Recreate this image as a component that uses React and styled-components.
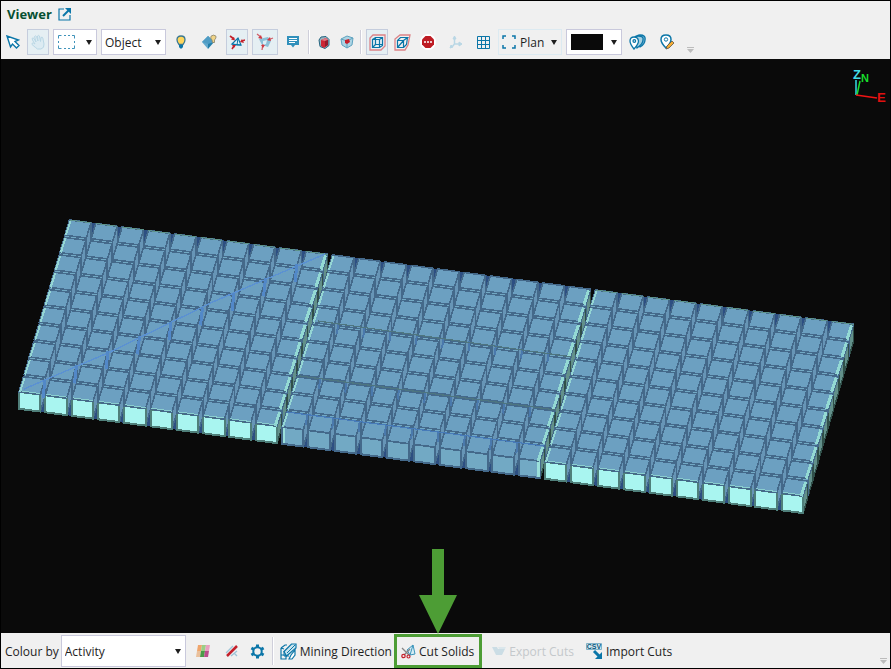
import styled, { createGlobalStyle } from "styled-components";

const GlobalStyle = createGlobalStyle`
  * {
    box-sizing: border-box;
  }
  body {
    margin: 0;
    background: #0a0a0a;
    font-family: "Open Sans", "Noto Sans", sans-serif;
    font-size: 12px;
    color: #1e1e1e;
  }
  button, select {
    font: inherit;
    color: inherit;
  }
`;

const blue = "#0b76a8";
const red = "#c4202b";
const pale = "#b9d7e5";

const CursorIcon = () => (
  <svg width="14" height="14" viewBox="0 0 14 14" fill="#fff" stroke={blue} strokeWidth="1.4">
    <path d="M1 1l3.500 11 2-3 4 4 2.500-2.500-4-4 3.500-1.500z" />
  </svg>
);

const HandIcon = () => (
  <svg width="16" height="16" viewBox="0 0 16 16" fill="#dcebf2" stroke={pale} strokeWidth="1">
    <path d="M3 7L2 4.500q1-1.200 2 0L6 8 4.500 2.500q1-1.300 2 0L8 7l-.5-5q1-1.200 2 0l1 5.500 .5-4q1.300-1 1.800.5l1.200 6q.5 4-3 5H7.500Q6 14 2 10.500q-.5-2 1.500-1.500L5 10z" />
  </svg>
);

const MarqueeIcon = () => (
  <svg width="17" height="14" viewBox="0 0 17 14" fill="none" stroke="#3f93ba">
    <path d="M.5 3.500v-3h3M6 .5h2M10 .5h2M14 .5h2.500v3M16.500 6v2M16.500 10.500v3H14M12 13.500h-2M8 13.500H6M3.500 13.500h-3v-3M.5 8V6" />
  </svg>
);

const BulbIcon = () => (
  <svg width="10" height="14" viewBox="0 0 10 14">
    <path d="M3 9.500Q1 7 1 4.700 1 1 5 1t4 3.700Q9 7 7 9.500z" fill="#ffd65c" stroke="#3b7892" strokeWidth="1.300" />
    <path d="M3 10h4v2L5.800 13.500H4.200L3 12z" fill={blue} />
  </svg>
);

const DiamondBulbIcon = () => (
  <svg width="16" height="16" viewBox="0 0 16 16">
    <path d="M1 8l6-6v13z" fill="#62a9ce" />
    <path d="M7 2l6 6-6 7z" fill="#237ea9" />
    <path d="M1 8l6-6 6 6-6 2z" fill="#4f9cc4" />
    <path d="M11 6Q9 4 10 2.200 12.500 0 15 2.200 15.500 4 13.500 6v2.500h-2z" fill="#f0d487" stroke="#89816a" strokeWidth=".8" />
  </svg>
);

const SnapIcon = () => (
  <svg width="16" height="16" viewBox="0 0 16 16">
    <path d="M3 10l6-6 3 7z" fill="#e4f4f8" stroke={blue} strokeWidth="1.200" />
    <path d="M3 10l5 1 4 0M9 4l-1 7" fill="none" stroke={blue} />
    <path d="M1 2l4 3M16 6l-3 1M3 15l2-3" stroke={red} strokeWidth="1.600" />
    <path d="M5 3l1 3.500-4-1zM13 5l-2 3 4 1zM3 11l4 0-2 3z" fill={red} />
  </svg>
);

const SolidSnapIcon = () => (
  <svg width="18" height="18" viewBox="0 0 18 18">
    <path d="M3 6l9-2 3 4-3 6-6-2z" fill="#8bc0d8" />
    <path d="M7 8l4-1-1 4-3 1z" fill="#dceff6" />
    <path d="M1 1l5 4M17 5l-5 2M6 17l1-6" stroke="#d0606a" strokeWidth="1.300" />
    <path d="M5 2l1 4-4-1zM14 4l-3 3 4 1zM5 12l4 0-2 3z" fill="#cf3a44" />
  </svg>
);

const CommentIcon = () => (
  <svg width="12" height="12" viewBox="0 0 12 12">
    <path d="M0 0h12v9H8l-2 2.500L4 9H0z" fill="#3190bb" />
    <path d="M2 2.500h8M2 4.500h8M2 6.500h6" stroke="#fff" />
  </svg>
);

const RedCubeIcon = () => (
  <svg width="12" height="13" viewBox="0 0 12 13">
    <path d="M3 1l5-.5 3 3v6l-4 3-5-2L1 4z" fill="#9db4c0" stroke="#246580" />
    <path d="M3 4l5-2 2 2v5l-4 3-3-2z" fill="#cb2635" />
    <path d="M3 4l5-2 2 2-3 1z" fill="#e27a84" />
    <path d="M7 5v6l3-2V4z" fill="#951b2c" />
  </svg>
);

const InnerCubeIcon = () => (
  <svg width="14" height="14" viewBox="0 0 14 14">
    <path d="M1 4l6-3 6 2-1 7-5 3-5-3z" fill="#acd4e4" stroke="#5fa3bf" />
    <path d="M1 4l6 2 6-3M7 6v7" stroke="#5fa3bf" fill="none" />
    <path d="M5 5l4-1 1 3-3 2-2-1z" fill={red} />
  </svg>
);

const WireCubeIcon = ({ skewed }) => (
  <svg width="17" height="17" viewBox="0 0 17 17" fill="none">
    <path
      d={skewed ? "M1 16V5l5-4h10l-2 10-3 5z" : "M1 16V4l3-3h12v11l-4 4z"}
      stroke="#dc8387"
      strokeWidth="1.300"
    />
    <path
      d={skewed ? "M3.500 6.500h6v7h-6zM3.500 6.500l3-3h7l-4 3M9.500 13.500l3-3 1-7M3.500 13.500l6-7" : "M3.500 5.500h7v8h-7zM3.500 5.500l3-2h7v8l-3 2M10.500 5.500l3-2M6.500 3.500v7h7M3.500 13.500l3-3"}
      stroke={blue}
      strokeWidth="1.200"
    />
  </svg>
);

const StopIcon = () => (
  <svg width="16" height="16" viewBox="0 0 16 16">
    <circle cx="8" cy="8" r="8" fill="#fff" />
    <path d="M5.500 2h5L14 5.500v5L10.500 14h-5L2 10.500v-5z" fill="#be1c24" />
    <path d="M4 8h2M7 8h2M10 8h2" stroke="#fff" strokeWidth="1.500" />
  </svg>
);

const AxisIcon = () => (
  <svg width="14" height="15" viewBox="0 0 14 15" fill={pale} stroke={pale}>
    <path d="M5.500 3v6H11M5.500 9L3 12" fill="none" strokeWidth="1.500" />
    <path d="M5.500 1L7 4H4zM13 9l-3-2v4zM1 13l1-3 2 2z" />
  </svg>
);

const GridIcon = () => (
  <svg width="13" height="13" viewBox="0 0 13 13" fill="none" stroke={blue}>
    <path d="M.5 .5h12v12H.5zM4.500 .5v12M8.500 .5v12M.5 4.500h12M.5 8.500h12" />
  </svg>
);

const PlanIcon = () => (
  <svg width="14" height="14" viewBox="0 0 14 14" fill="none" stroke={blue} strokeWidth="1.500">
    <path d="M1 4V1h3M10 1h3v3M13 10v3h-3M4 13H1v-3" />
  </svg>
);

const PinsIcon = () => (
  <svg width="17" height="16" viewBox="0 0 17 16" stroke={blue} strokeWidth="1.300">
    <path d="M8 10Q5 1 11 1t5 5q0 4-5 7z" fill="#7ab8d5" />
    <path d="M7 10Q3 2 9 2t5 4q0 4-6 8z" fill="#a5d0e2" />
    <path d="M5 15Q1 10 1 7 1 3 5 3t4.500 4Q9.500 10 5 15z" fill="#fff" />
    <circle cx="5.300" cy="7" r="1.300" fill="#fff" />
  </svg>
);

const PinEditIcon = () => (
  <svg width="14" height="16" viewBox="0 0 14 16">
    <path d="M6 14Q1 9 1 5.500 1 1 6 1t5 4.500Q11 9 6 14z" fill="#fff" stroke={blue} strokeWidth="1.500" />
    <circle cx="6" cy="5.500" r="1.700" fill="#fff" stroke={blue} />
    <path d="M6 15l1-3 5-5 2 2-5 5z" fill="#f5ad35" stroke="#5c5547" strokeWidth=".8" />
  </svg>
);

const OverflowIcon = () => (
  <svg width="7" height="6" viewBox="0 0 7 6">
    <path d="M0 0h7v1H0zM0 2h7L3.500 6z" fill="#bcbcbc" />
  </svg>
);

const PopOutIcon = () => (
  <svg width="13" height="13" viewBox="0 0 13 13" fill="none" stroke={blue} strokeWidth="1.200">
    <path d="M6 1H1v11h11V7" />
    <path d="M5 8l6-6" strokeWidth="2" />
    <path d="M7 0h6v6z" fill={blue} stroke="none" />
  </svg>
);

const PaletteIcon = () => (
  <svg width="14" height="12" viewBox="0 0 14 12">
    <path d="M2 0h4L5 6H1z" fill="#efa56c" />
    <path d="M6 0h4L9 6H5z" fill="#9ace86" />
    <path d="M10 0h4l-1 6H9z" fill="#e9a0c0" />
    <path d="M1 6h4l-1 6H0z" fill="#eac09b" />
    <path d="M5 6h4l-1 6H4z" fill="#4b9d49" />
    <path d="M9 6h4l-1 6H8z" fill="#bc4d8d" />
  </svg>
);

const NoLineIcon = () => (
  <svg width="14" height="14" viewBox="0 0 14 14" fill="none">
    <path d="M1 9l7-7M2 12l9-8M6 12l6-5M9 9l3 3" stroke="#9cc3d7" strokeWidth="1.300" />
    <path d="M2 12L12 2" stroke={red} strokeWidth="2.500" />
  </svg>
);

const GearIcon = () => (
  <svg width="15" height="15" viewBox="0 0 15 15" fill="none" stroke={blue}>
    <circle cx="7.500" cy="7.500" r="4.200" strokeWidth="2" />
    <path d="M7.500 .5v2.500M7.500 12v2.500M1.400 4l2.200 1.200M11.400 9.800l2.200 1.200M1.400 11l2.200-1.200M11.400 5.200L13.600 4" strokeWidth="3" />
  </svg>
);

const MiningIcon = () => (
  <svg width="17" height="17" viewBox="0 0 17 17" fill="none" stroke={blue}>
    <path d="M1 5v11h5v-4H1zM1 5l4-3h2M1 5l3 1" strokeWidth="1.200" />
    <path d="M4 8.500L11.500 1H16v4L6.500 13z" fill="#c9e4ee" strokeWidth="1.200" />
    <path d="M4 8v5h5M7 10l8-8" />
    <path d="M9 16l2-4 4-5v5l-3 4z" fill="#fff" strokeWidth="1.200" />
  </svg>
);

const CutIcon = () => (
  <svg width="15" height="15" viewBox="0 0 15 15" fill="none">
    <path d="M6 6l6-5 2 9-5 1z" fill="#d7edf5" stroke="#3b95bb" />
    <path d="M12 1l-3 10" stroke="#3b95bb" />
    <path d="M1 4l7 7M9 5l-6 6" stroke="#858585" strokeWidth="1.300" />
    <circle cx="2.500" cy="12" r="1.700" stroke={red} strokeWidth="1.200" />
    <circle cx="7.500" cy="12.500" r="1.500" stroke={red} strokeWidth="1.200" />
  </svg>
);

const ExportIcon = () => (
  <svg width="14" height="10" viewBox="0 0 14 10">
    <path d="M0 1h5l1 2h7l-3 6H4z" fill="#cbdde5" />
    <path d="M6 1h8l-1 2H7z" fill="#dbe7ec" />
  </svg>
);

const CsvIcon = () => (
  <svg width="17" height="17" viewBox="0 0 17 17">
    <path d="M.5 .5h15v6H.5z" fill="#d7e8ef" stroke="#80b2c8" />
    <text x="8" y="6" textAnchor="middle" fontSize="7" fontWeight="700" fontFamily="Liberation Sans, sans-serif" fill="#07587e">
      CSV
    </text>
    <path d="M8 8l6 6" stroke={blue} strokeWidth="3" />
    <path d="M16 9v7H9z" fill={blue} />
  </svg>
);

// slab of solids: three panels of ten by ten blocks
const COL = [26.3, 3.5];
const ROW = [-5.1, 17.4];
const WIDE = [21.4, 2.8];
const DEEP = [-4.6, 15.2];
const DROP = 17;
const ORIGIN = [69.5, 220];

const add = (...points) => points.reduce((a, b) => [a[0] + b[0], a[1] + b[1]]);
const times = (v, n) => [v[0] * n, v[1] * n];
const poly = (...points) => points.map((p) => p.map((n) => n.toFixed(1)).join(",")).join(" ");
const corner = (col, row) => add(ORIGIN, times(COL, col), times(ROW, row));

const Block = ({ col, row }) => {
  const panel = Math.floor(col / 10);
  const first = col % 10 === 0;
  const last = col % 10 === 9;
  const bright = row === 9 && panel !== 1;
  const tl = corner(col, row);
  const tr = add(tl, WIDE);
  const bl = add(tl, DEEP);
  const br = add(tr, DEEP);
  const down = [0, DROP];
  const edge = "#44698a";

  return (
    <g>
      <polygon
        points={poly(tr, br, add(br, down), add(tr, down))}
        fill={last ? "#62908a" : "#6795b6"}
        stroke={last ? "#304f49" : edge}
        strokeWidth="1.4"
      />
      <polygon
        points={poly(bl, br, add(br, down), add(bl, down))}
        fill={bright ? "#a9f5f0" : "#72a9c4"}
        stroke={bright ? "#4f7f7a" : edge}
        strokeWidth={row === 9 ? 2 : 1}
      />
      <polygon points={poly(tl, tr, br, bl)} fill="#6ca0c1" stroke={edge} strokeWidth="1.6" />
      {first && <path d={`M${add(tl, [1, 1])}L${add(bl, [1, 0])}`} stroke="#94d6d4" strokeWidth="2" />}
      {last && <path d={`M${add(tr, [-2, 1])}L${add(br, [-2, 0])}`} stroke="#94dad4" strokeWidth="3" />}
      {bright && <path d={`M${add(bl, [1, -1])}L${add(br, [0, -1])}`} stroke="#8bcfcf" />}
      {row === 0 && panel !== 1 && <path d={`M${tl}L${tr}`} stroke="#5d938a" />}
      {row === 9 && panel === 1 && last && (
        <path d={`M${add(br, [-2, 1])}v${DROP - 2}`} stroke="#9be0da" strokeWidth="3" />
      )}
      {row === 9 && panel === 1 && first && (
        <path d={`M${add(bl, [2, 1])}v${DROP - 2}`} stroke="#9be0da" strokeWidth="2" />
      )}
    </g>
  );
};

const Panel = ({ index }) => {
  const start = index * 10;
  const tl = corner(start, 0);
  const span = add(times(COL, 9), WIDE);
  const fall = add(times(ROW, 9), DEEP);
  const base = add(tl, ROW);
  const rest = add(times(ROW, 8), DEEP);
  const cells = Array.from({ length: 100 }, (_, i) => ({ row: Math.floor(i / 10), col: start + (i % 10) }));

  return (
    <g>
      <polygon
        points={poly(tl, add(tl, span), add(tl, span, fall), add(tl, span, fall, [0, DROP]), add(tl, fall, [0, DROP]), add(tl, fall))}
        fill="#2d4f82"
      />
      <polygon points={poly(base, add(base, span), add(base, span, rest), add(base, rest))} fill="#486e91" />
      {cells.map(({ row, col }) => (
        <Block key={`${row}-${col}`} row={row} col={col} />
      ))}
    </g>
  );
};

const seams = [
  { from: [318, 321], to: [572, 357], color: "#4d7580" },
  { from: [300, 376], to: [556, 410], color: "#4d7580" },
  { from: [287, 412], to: [544, 446], color: "#477bb9" },
];

const Scene = () => (
  <SceneSvg viewBox="1 59 889 574" role="img" aria-label="Solids view">
    <g shapeRendering="crispEdges" fill="none">
      {[0, 1, 2].map((index) => (
        <Panel key={index} index={index} />
      ))}
      <path d="M24 389L110 352 215 301 325 254" stroke="#5b91d2" strokeWidth="1.4" />
      {Array.from({ length: 9 }, (_, i) => (
        <path key={i} d={`M${45 + i * 31.5} ${380 - i * 14.5}l-2 18`} stroke="#5288c8" strokeWidth="3" />
      ))}
      {seams.map(({ from, to, color }) => (
        <g key={from.join()}>
          {Array.from({ length: 9 }, (_, i) => (
            <path key={i} d={`M${from[0] + 20 + i * 26.3} ${from[1] + 3 + i * 3.5}l-1 10`} stroke="#4a79ac" strokeWidth="2" />
          ))}
          <path d={`M${from}L${to}`} stroke={color} strokeWidth="1.2" />
        </g>
      ))}
    </g>
    <g strokeWidth="1.5" fontFamily="Liberation Sans, sans-serif" fontWeight="700" fontSize="13">
      <path d="M856 95V80" stroke="#35dce6" />
      <path d="M857 95l3-14" stroke="#18df2b" />
      <path d="M856 95l21 3" stroke="#f01414" />
      <text x="861" y="82" fontSize="11" fill="#18df2b">N</text>
      <text x="853" y="79" fill="#42dce8">Z</text>
      <text x="877" y="102" fill="#e01010">E</text>
    </g>
  </SceneSvg>
);

const tools = [
  { name: "Select", Icon: CursorIcon, width: 20 },
  { name: "Pan", Icon: HandIcon, width: 22, active: true },
];

const viewTools = [
  { name: "Highlight", Icon: BulbIcon, width: 22 },
  { name: "Object lighting", Icon: DiamondBulbIcon, width: 26 },
  { name: "Snap to points", Icon: SnapIcon, width: 22, active: true },
  { name: "Snap to solids", Icon: SolidSnapIcon, width: 26, active: true },
  { name: "Comments", Icon: CommentIcon, width: 22 },
];

const gridTools = [
  { name: "Stop", Icon: StopIcon, width: 24 },
  { name: "Axes", Icon: AxisIcon, width: 24 },
  { name: "Grid", Icon: GridIcon, width: 22 },
];

const Tool = ({ name, Icon, width, active, skewed }) => (
  <ToolButton type="button" aria-label={name} $width={width} $active={active}>
    <Icon skewed={skewed} />
  </ToolButton>
);

export default function App() {
  return (
    <>
      <GlobalStyle />
      <Viewer>
        <Header>
          <h1>Viewer</h1>
          <PlainButton type="button" aria-label="Open in new window">
            <PopOutIcon />
          </PlainButton>
        </Header>
        <Toolbar>
          {tools.map((tool) => (
            <Tool key={tool.name} {...tool} />
          ))}
          <DropButton type="button" aria-label="Selection shape" $width={44}>
            <MarqueeIcon />
            <Caret />
          </DropButton>
          <SelectBox $width={65}>
            <select aria-label="Selection mode" defaultValue="Object">
              <option>Object</option>
            </select>
            <Caret />
          </SelectBox>
          {viewTools.map((tool) => (
            <Tool key={tool.name} {...tool} />
          ))}
          <Separator />
          <Tool name="Solid faces" Icon={RedCubeIcon} width={20} />
          <Tool name="Transparent faces" Icon={InnerCubeIcon} width={18} />
          <Separator />
          <Tool name="Parallel view" Icon={WireCubeIcon} width={22} active />
          <Tool name="Perspective view" Icon={WireCubeIcon} width={20} skewed />
          {gridTools.map((tool) => (
            <Tool key={tool.name} {...tool} />
          ))}
          <SelectBox $width={64} $flat>
            <PlanIcon />
            <select aria-label="View direction" defaultValue="Plan">
              <option>Plan</option>
            </select>
            <Caret />
          </SelectBox>
          <DropButton type="button" aria-label="Background colour" $width={56}>
            <Swatch />
            <Caret />
          </DropButton>
          <Tool name="Pins" Icon={PinsIcon} width={22} />
          <Tool name="Edit pin" Icon={PinEditIcon} width={30} />
          <Overflow type="button" aria-label="More tools">
            <OverflowIcon />
          </Overflow>
        </Toolbar>
        <Canvas>
          <Scene />
        </Canvas>
        <BottomBar>
          <label htmlFor="colour">Colour by</label>
          <SelectBox $width={125} $tall>
            <select id="colour" defaultValue="Activity">
              <option>Activity</option>
            </select>
            <Caret />
          </SelectBox>
          <BarTools>
            <Tool name="Palette" Icon={PaletteIcon} width={30} />
            <Tool name="Hide lines" Icon={NoLineIcon} width={28} />
            <Tool name="Settings" Icon={GearIcon} width={24} />
          </BarTools>
          <Separator $tall />
          <Action type="button">
            <MiningIcon />
            Mining Direction
          </Action>
          <Highlight>
            <Arrow viewBox="0 0 38 85">
              <path d="M13 0h12v46h13L19 85 0 46h13z" fill="#4d9d35" />
            </Arrow>
            <Action type="button">
              <CutIcon />
              Cut Solids
            </Action>
          </Highlight>
          <Action type="button" disabled>
            <ExportIcon />
            Export Cuts
          </Action>
          <Action type="button">
            <CsvIcon />
            Import Cuts
          </Action>
          <Overflow type="button" aria-label="More actions" $end>
            <OverflowIcon />
          </Overflow>
        </BottomBar>
      </Viewer>
    </>
  );
}

const Viewer = styled.main`
  display: flex;
  flex-direction: column;
  height: 100vh;
  border: 1px solid #000;
  background: #f0f0f0;
`;

const Header = styled.header`
  display: flex;
  align-items: center;
  gap: 6px;
  height: 26px;
  padding-left: 6px;
  h1 {
    margin: 0;
    font-size: 13px;
    line-height: 26px;
    color: #064f32;
  }
`;

const PlainButton = styled.button`
  display: flex;
  padding: 0;
  border: none;
  background: none;
`;

const Toolbar = styled.div`
  display: flex;
  align-items: center;
  gap: 4px;
  height: 32px;
  padding: 0 2px 2px;
`;

const ToolButton = styled.button`
  display: flex;
  flex-shrink: 0;
  align-items: center;
  justify-content: center;
  width: ${(props) => props.$width}px;
  height: 26px;
  padding: 0;
  border: ${(props) => (props.$active ? "1px solid #c5cddd" : "none")};
  background: ${(props) => (props.$active ? "#e5eff3" : "none")};
  svg {
    flex-shrink: 0;
  }
`;

const DropButton = styled.button`
  display: flex;
  flex-shrink: 0;
  align-items: center;
  width: ${(props) => props.$width}px;
  height: 26px;
  padding: 0 4px;
  border: 1px solid #c9c9dc;
  background: #fff;
  position: relative;
`;

const SelectBox = styled.div`
  display: flex;
  flex-shrink: 0;
  align-items: center;
  width: ${(props) => props.$width}px;
  height: ${(props) => (props.$tall ? 32 : 26)}px;
  padding-left: 3px;
  border: 1px solid ${(props) => (props.$flat ? "#dceaf1" : "#c9c9dc")};
  background: ${(props) => (props.$flat ? "none" : "#fff")};
  position: relative;
  select {
    flex: 1;
    min-width: 0;
    height: 100%;
    padding: 0;
    border: none;
    background: none;
    appearance: none;
  }
  svg + select {
    padding-left: 4px;
  }
`;

const Caret = styled.span`
  position: absolute;
  top: 50%;
  right: 4px;
  margin-top: -2px;
  border: 3px solid transparent;
  border-top: 5px solid #1e1e1e;
  border-bottom: none;
  pointer-events: none;
`;

const Swatch = styled.span`
  width: 32px;
  height: 16px;
  background: #0a0a0a;
`;

const Separator = styled.span`
  flex-shrink: 0;
  width: 2px;
  height: ${(props) => (props.$tall ? 28 : 24)}px;
  border-left: 1px solid #cfcfda;
  background: #fff;
`;

const Overflow = styled(PlainButton)`
  align-self: flex-end;
  margin-left: ${(props) => (props.$end ? "auto" : "0")};
  padding: 4px 1px;
`;

const Canvas = styled.section`
  flex: 1;
  min-height: 0;
  background: #0a0a0a;
`;

const SceneSvg = styled.svg`
  display: block;
  width: 100%;
  height: 100%;
`;

const BottomBar = styled.footer`
  display: flex;
  align-items: center;
  gap: 2px;
  height: 35px;
  padding: 1px 2px 0 4px;
  white-space: nowrap;
`;

const BarTools = styled.div`
  display: flex;
`;

const Action = styled.button`
  display: flex;
  align-items: center;
  gap: 3px;
  height: 28px;
  padding: 0 0 0 4px;
  border: none;
  background: none;
  &:disabled {
    padding: 0 6px 0 8px;
    color: #c4c8cb;
  }
`;

const Highlight = styled.div`
  display: flex;
  align-items: center;
  height: 34px;
  padding-right: 5px;
  border: 3px solid #4d9d35;
  position: relative;
`;

const Arrow = styled.svg`
  position: absolute;
  left: 50%;
  bottom: 100%;
  width: 38px;
  height: 85px;
  margin: 0 0 3px -19px;
`;
